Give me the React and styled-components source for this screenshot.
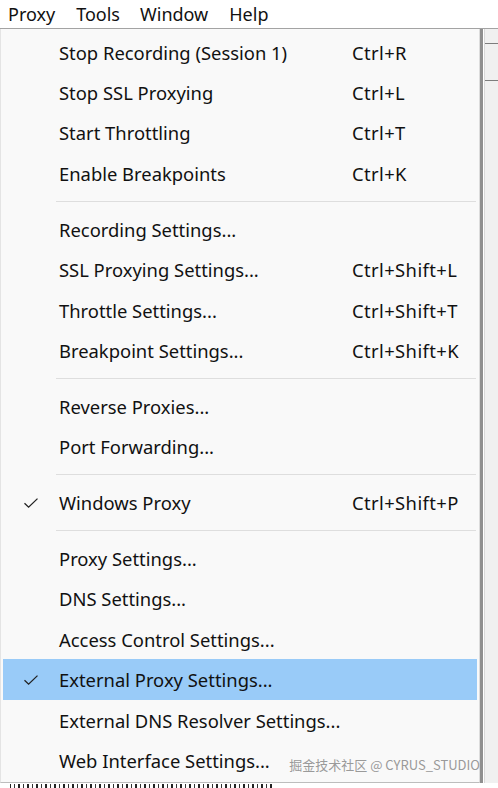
import React from 'react';
import styled, { createGlobalStyle } from 'styled-components';

const Global = createGlobalStyle`
  html, body {
    margin: 0;
    padding: 0;
    background: #ffffff;
    overflow: hidden;
  }
  body {
    font-family: "Noto Sans", "Noto Sans CJK SC", sans-serif;
    color: #111;
  }
`;

const Page = styled.div`
  width: 498px;
  height: 788px;
  display: flex;
  flex-direction: column;
  overflow: hidden;
`;

const MenuBar = styled.div`
  height: 28px;
  display: flex;
  align-items: center;
  padding-left: 8px;
  border-bottom: 1px solid #a3a3a3;
  background: #fff;
  flex-shrink: 0;
`;

const BarItem = styled.span`
  font-size: 18px;
  line-height: 28px;
  margin-right: ${p => p.gap}px;
  color: #111;
`;

const Body = styled.div`
  display: flex;
  flex: 1;
  min-height: 0;
`;

const Popup = styled.div`
  width: 480px;
  flex-shrink: 0;
  background: #f9f9f9;
  border-left: 1px solid #e4e4e4;
  border-right: 1px solid #dcdcdc;
  border-bottom: 1px solid #bdbdbd;
  box-shadow: 3px 0 0 #8f8f8f;
  padding: 3px 2px 0 2px;
  position: relative;
  height: 754px;
  box-sizing: border-box;
`;

const Side = styled.div`
  flex: 1;
  margin-left: 4px;
  background: #f0f0f0;
  border-left: 1px solid #d8d8d8;
  display: flex;
  flex-direction: column;
`;

const SideRule = styled.div`
  height: 1px;
  background: #7d7d7d;
  margin-top: ${p => p.top}px;
`;

const Row = styled.div`
  height: 40.4px;
  display: grid;
  grid-template-columns: 56px 293px 1fr;
  align-items: center;
  background: ${p => (p.active ? '#99cbf8' : 'transparent')};
  font-size: 18.4px;
  color: #111;
  white-space: nowrap;
`;

const Check = styled.span`
  display: flex;
  justify-content: center;
`;

const Shortcut = styled.span`
  letter-spacing: 0.4px;
`;

const Sep = styled.div`
  height: 15.5px;
  display: flex;
  align-items: center;
  padding-left: 53px;
  padding-right: 1px;

  &::after {
    content: '';
    flex: 1;
    height: 1px;
    background: #dedede;
  }
`;

const Mark = styled.div`
  position: absolute;
  right: -1px;
  bottom: 8px;
  font-size: 13px;
  color: #9a9a9a;
  font-family: "Noto Sans CJK SC", "Noto Sans", sans-serif;
`;

/* the window behind the popup peeks out below it: tops of its glyphs */
const Under = styled.div`
  height: 5px;
  flex-shrink: 0;
  background-color: #fff;
  background-image:
    linear-gradient(#fff 0 1px, transparent 1px),
    linear-gradient(90deg, #fff 0 10px, transparent 10px 272px, #fff 272px),
    repeating-linear-gradient(90deg, #222 0 2px, transparent 2px 5px, #333 5px 6px, transparent 6px 9px),
    linear-gradient(90deg, transparent 0 300px, #777 300px 312px, transparent 312px 322px,
      #999 322px 323px, transparent 323px);
`;

const Tick = () => (
  <svg width="16" height="12" viewBox="0 0 16 12">
    <path d="M1.5 6.2 L5.6 10.2 L14.5 1.6" fill="none" stroke="#222" strokeWidth="1.3" />
  </svg>
);

const groups = [
  [
    ['Stop Recording (Session 1)', 'Ctrl+R'],
    ['Stop SSL Proxying', 'Ctrl+L'],
    ['Start Throttling', 'Ctrl+T'],
    ['Enable Breakpoints', 'Ctrl+K'],
  ],
  [
    ['Recording Settings...', ''],
    ['SSL Proxying Settings...', 'Ctrl+Shift+L'],
    ['Throttle Settings...', 'Ctrl+Shift+T'],
    ['Breakpoint Settings...', 'Ctrl+Shift+K'],
  ],
  [
    ['Reverse Proxies...', ''],
    ['Port Forwarding...', ''],
  ],
  [['Windows Proxy', 'Ctrl+Shift+P', 'check']],
  [
    ['Proxy Settings...', ''],
    ['DNS Settings...', ''],
    ['Access Control Settings...', ''],
    ['External Proxy Settings...', '', 'check', true],
    ['External DNS Resolver Settings...', ''],
    ['Web Interface Settings...', ''],
  ],
];

export default function App() {
  return (
    <Page>
      <Global />
      <MenuBar>
        <BarItem gap={21}>Proxy</BarItem>
        <BarItem gap={20}>Tools</BarItem>
        <BarItem gap={21}>Window</BarItem>
        <BarItem gap={0}>Help</BarItem>
      </MenuBar>
      <Body>
        <Popup>
          {groups.map((g, gi) => (
            <React.Fragment key={gi}>
              {gi > 0 && <Sep />}
              {g.map(([label, keys, check, active]) => (
                <Row key={label} active={active}>
                  <Check>{check && <Tick />}</Check>
                  <span>{label}</span>
                  <Shortcut>{keys}</Shortcut>
                </Row>
              ))}
            </React.Fragment>
          ))}
          <Mark>掘金技术社区 @ CYRUS_STUDIO</Mark>
        </Popup>
        <Side>
          <SideRule top={14} />
          <SideRule top={36} />
        </Side>
      </Body>
      <Under />
    </Page>
  );
}
